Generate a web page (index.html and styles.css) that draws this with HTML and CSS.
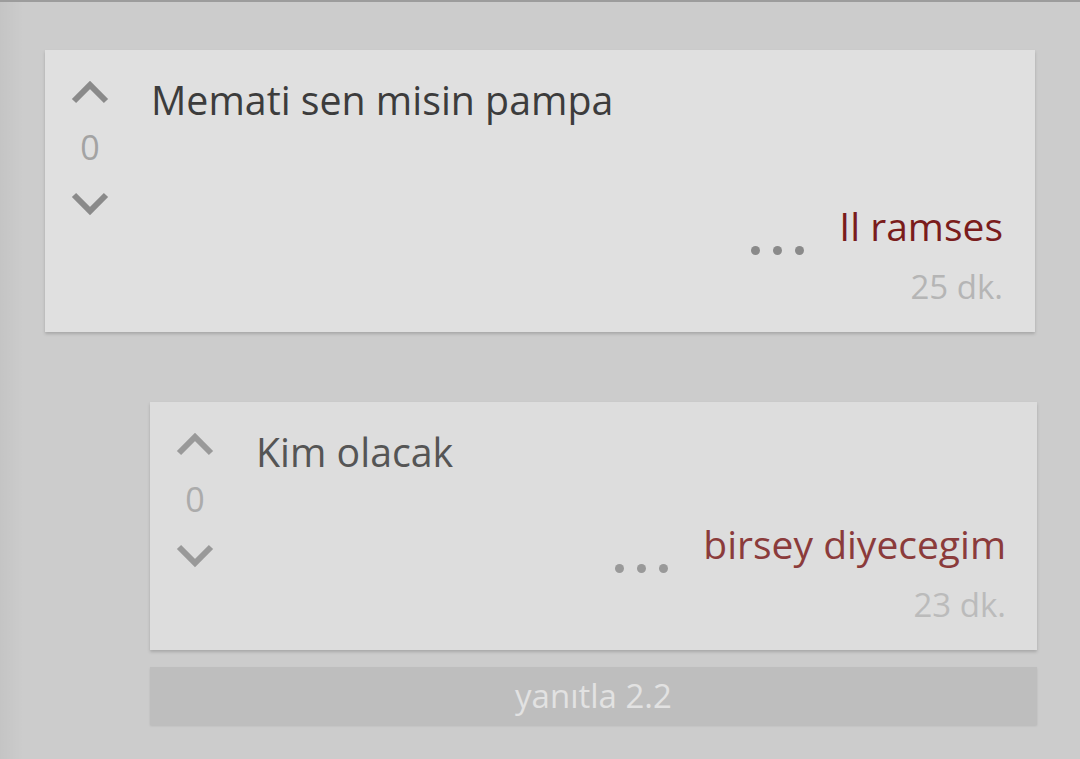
FILE: index.html
```html
<!DOCTYPE html>
<html lang="tr">
<head>
<meta charset="UTF-8">
<meta name="viewport" content="width=device-width, initial-scale=1.0">
<title>Yorumlar</title>
<link rel="stylesheet" href="styles.css">
</head>
<body>

<div class="thread">
  <!-- ana yorum -->
  <div class="card">
    <div class="vote">
      <svg class="chev" viewBox="0 0 36 22"><polyline points="2,20 18,4 34,20"/></svg>
      <div class="score">0</div>
      <svg class="chev" viewBox="0 0 36 22"><polyline points="2,2 18,18 34,2"/></svg>
    </div>
    <div class="body">
      <div class="title">Memati sen misin pampa</div>
      <div class="meta">
        <div class="row">
          <span class="dots"><i></i><i></i><i></i></span>
          <span class="author">Il ramses</span>
        </div>
        <div class="time">25 dk.</div>
      </div>
    </div>
  </div>

  <!-- cevaplar -->
  <div class="replies">
    <div class="card card-reply">
      <div class="vote">
        <svg class="chev" viewBox="0 0 36 22"><polyline points="2,20 18,4 34,20"/></svg>
        <div class="score">0</div>
        <svg class="chev" viewBox="0 0 36 22"><polyline points="2,2 18,18 34,2"/></svg>
      </div>
      <div class="body">
        <div class="title">Kim olacak</div>
        <div class="meta">
          <div class="row">
            <span class="dots"><i></i><i></i><i></i></span>
            <span class="author">birsey diyecegim</span>
          </div>
          <div class="time">23 dk.</div>
        </div>
      </div>
    </div>
    <div class="reply-btn">yanıtla 2.2</div>
  </div>
</div>

</body>
</html>
```

FILE: styles.css
```css
body {
  margin: 0;
  background-color: #cccccc;
  background-image: linear-gradient(to right, rgba(0, 0, 0, 0.04), rgba(0, 0, 0, 0) 24px);
  border-top: 2px solid #9c9c9c;
  font-family: "Open Sans", "Noto Sans", sans-serif;
  height: 757px;
  overflow: hidden;
}
.thread {
  padding: 48px 45px 0 45px;
}
.card {
  display: flex;
  background-color: #e0e0e0;
  height: 282px;
  box-shadow: 0 2px 3px rgba(0, 0, 0, 0.18);
}
.vote {
  width: 90px;
  flex: none;
  display: flex;
  flex-direction: column;
  align-items: center;
  padding-top: 31px;
}
.chev {
  width: 36px;
  height: 22px;
  overflow: visible;
}
.chev polyline {
  fill: none;
  stroke: #8a8a8a;
  stroke-width: 6;
}
.score {
  font-size: 34px;
  line-height: 46px;
  color: #a3a3a3;
  margin: 21px 0 23px 0;
}
.body {
  flex: 1;
  display: flex;
  flex-direction: column;
  justify-content: space-between;
  padding: 24px 32px 23px 16px;
}
.title {
  font-size: 39.3px;
  line-height: 53px;
  color: #3c3c3c;
}
.meta {
  display: flex;
  flex-direction: column;
  align-items: flex-end;
}
.row {
  display: flex;
  align-items: baseline;
  margin-bottom: 12px;
}
.dots {
  display: flex;
  gap: 13px;
  margin-right: 35px;
  align-self: flex-end;
  margin-bottom: -3px;
}
.dots i {
  width: 9px;
  height: 9px;
  border-radius: 50%;
  background-color: #8a8a8a;
}
.author {
  font-size: 39px;
  line-height: 53px;
  color: #7a1c1c;
}
.time {
  font-size: 33px;
  line-height: 45px;
  color: #b5b5b5;
}

.replies {
  margin: 70px -2px 0 105px;
}
.card-reply {
  background-color: #dddddd;
  height: 248px;
}
.card-reply .chev polyline {
  stroke: #999999;
}
.card-reply .score {
  color: #ababab;
}
.card-reply .body {
  padding-right: 31px;
}
.card-reply .title {
  color: #555555;
}
.card-reply .author {
  color: #8b3b3b;
}
.card-reply .dots i {
  background-color: #999999;
}
.card-reply .time {
  color: #bbbbbb;
}
.reply-btn {
  margin-top: 17px;
  height: 58px;
  line-height: 58px;
  background-color: #bebebe;
  color: #e2e2e2;
  font-size: 33px;
  text-align: center;
  box-shadow: 0 1px 2px rgba(0, 0, 0, 0.1);
}
```
